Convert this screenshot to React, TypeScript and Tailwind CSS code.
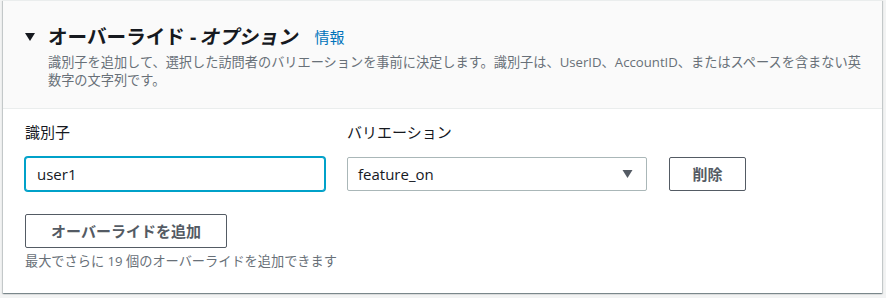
const font = "font-['Open_Sans','Noto_Sans_CJK_JP',sans-serif]";

function Caret({ className }: { className?: string }) {
  return <svg viewBox="0 0 10 8" className={className} aria-hidden="true"><polygon points="0,0 10,0 5,8" fill="currentColor" /></svg>;
}

function Field({ label, children }: { label: string; children: React.ReactNode }) {
  return <div className="flex flex-col">
    <span className="text-[15px] leading-[20px] text-[#16191f]">{label}</span>
    <div className="mt-[15px]">{children}</div>
  </div>;
}

export default function App() {
  return <div className={`w-[886px] h-[298px] bg-[#f2f3f3] pl-[3px] ${font}`}>
    <div className="w-[879px] h-[293px] bg-white border-t border-[#eaeded] shadow-[0_1px_1px_0_rgba(0,28,36,0.3),1px_1px_1px_0_rgba(0,28,36,0.15),-1px_1px_1px_0_rgba(0,28,36,0.15)]">
      <div className="h-[108px] bg-[#fafafa] border-b border-[#eaeded] pl-[22px] pt-[25px]">
        <div className="flex items-center h-[22px]">
          <Caret className="w-[10px] h-[8px] text-[#16191f]" />
          <h2 className="ml-[13px] text-[19.6px] leading-[22px] font-bold text-[#16191f]">オーバーライド - <span className="inline-block -skew-x-12">オプション</span></h2>
          <a className="ml-[15px] text-[15px] text-[#0073bb]">情報</a>
        </div>
        <p className="mt-[5px] ml-[23px] text-[13.2px] leading-[18px] text-[#687078]">
          <span className="block whitespace-nowrap">識別子を追加して、選択した訪問者のバリエーションを事前に決定します。識別子は、UserID、AccountID、またはスペースを含まない英</span>
          <span className="block whitespace-nowrap">数字の文字列です。</span>
        </p>
      </div>
      <div className="pl-[22px] pt-[13px]">
        <div className="flex items-end gap-[22px]">
          <Field label="識別子">
            <input readOnly value="user1" className="block w-[300px] h-[34px] border border-[#00a1c9] shadow-[0_0_0_1px_#00a1c9] rounded-[3px] px-[11px] text-[15px] text-[#16191f] outline-none bg-white" />
          </Field>
          <Field label="バリエーション">
            <div className="flex items-center justify-between w-[300px] h-[34px] border border-[#aab7b8] rounded-[2px] pl-[10px] pr-[12px] bg-white">
              <span className="text-[15px] text-[#16191f]">feature_on</span>
              <Caret className="w-[13px] h-[8px] text-[#545b64]" />
            </div>
          </Field>
          <button type="button" className="w-[77px] h-[34px] border border-[#545b64] rounded-[2px] text-[15px] font-bold text-[#545b64] bg-white">削除</button>
        </div>
        <button type="button" className="mt-[23px] w-[202px] h-[34px] border border-[#545b64] rounded-[2px] text-[15px] font-bold text-[#545b64] bg-white">オーバーライドを追加</button>
        <p className="mt-[5px] text-[13.2px] leading-[16px] text-[#687078]">最大でさらに 19 個のオーバーライドを追加できます</p>
      </div>
    </div>
  </div>;
}
